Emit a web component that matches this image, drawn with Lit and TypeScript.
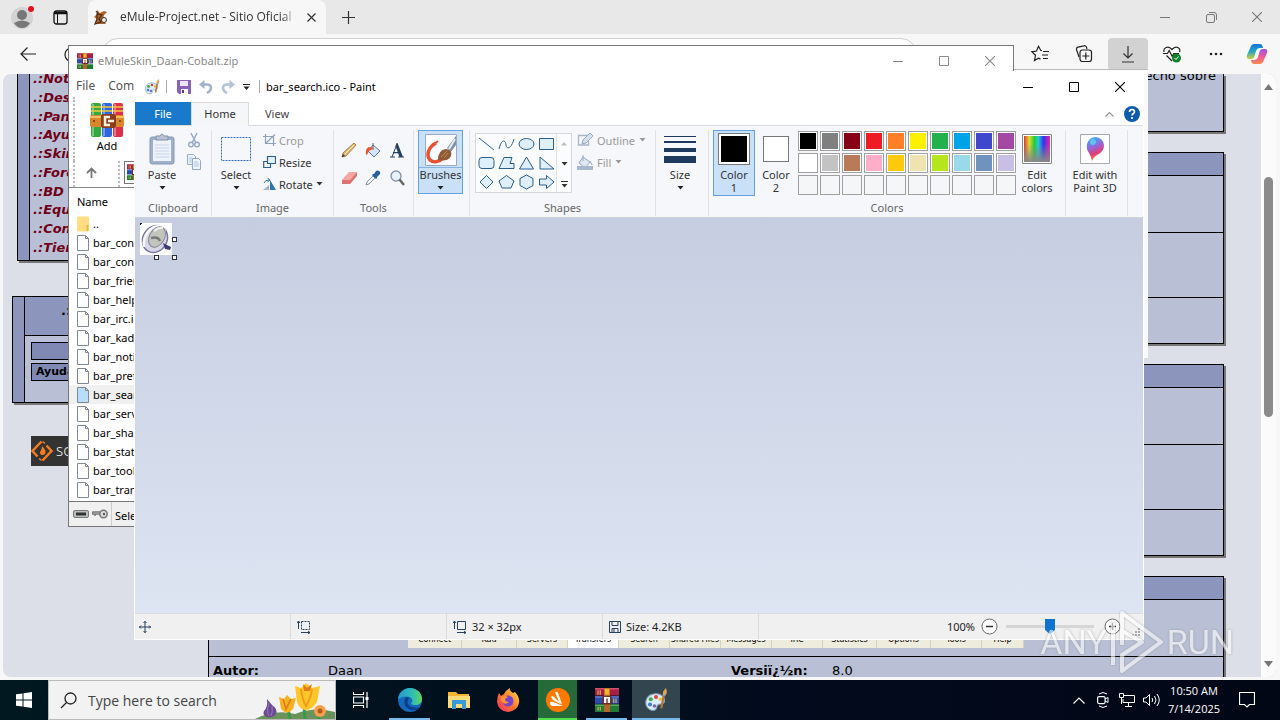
import { LitElement, html, svg, css } from "lit";
import { customElement } from "lit/decorators.js";
import { classMap } from "lit/directives/class-map.js";

const icon = (w: number, h: number, body: unknown) =>
  html`<svg width=${w} height=${h} viewBox="0 0 ${w} ${h}" fill="none" aria-hidden="true">${body}</svg>`;

const caret = html`<svg class="caret" width="7" height="4" viewBox="0 0 7 4" aria-hidden="true"><path d="M0.5 0h6L3.5 3.5z" fill="currentColor" /></svg>`;

const minimizeIcon = icon(10, 10, svg`<path d="M0 5.5h10" stroke="currentColor"/>`);
const maximizeIcon = icon(10, 10, svg`<path d="M.5 .5h9v9h-9z" stroke="currentColor"/>`);
const closeIcon = icon(10, 10, svg`<path d="M0 0l10 10M10 0L0 10" stroke="currentColor" stroke-width="1.1"/>`);
const restoreIcon = icon(11, 11, svg`<rect x=".5" y="2.500" width="8" height="8" rx="1.500" stroke="currentColor"/><path d="M3 .5h5a2.500 2.500 0 0 1 2.500 2.500v5" stroke="currentColor"/>`);

const booksIcon = (size: number) => html`<svg width=${size} height=${size} viewBox="0 0 32 32" aria-hidden="true">
  <rect x="0" y="0" width="32" height="10" fill="#a81f45"/><rect x="0" y="0" width="32" height="2" fill="#d0506e"/>
  <rect x="0" y="11" width="32" height="10" fill="#2f4ba8"/><rect x="0" y="11" width="32" height="2" fill="#6078cc"/>
  <rect x="0" y="22" width="32" height="10" fill="#1f7a35"/><rect x="0" y="22" width="32" height="2" fill="#56aa5c"/>
  <path d="M4 3v6M7 3v6M25 14v6M28 14v6M4 25v5M7 25v5" stroke="#d9b45e" stroke-width="1.500"/>
  <rect x="12" y="0" width="8" height="32" fill="#b5652a"/><path d="M13 1h6v8h-6z" fill="#efb62e"/>
  <rect x="10" y="11" width="12" height="11" fill="#6e2a22"/><rect x="12" y="12" width="8" height="8" fill="#fff"/><path d="M15 14h2v6h-2z" fill="#7b3b2b"/>
</svg>`;

const paletteIcon = (size: number) => html`<svg width=${size} height=${size} viewBox="0 0 32 32" aria-hidden="true">
  <path d="M13 8C5 9 1 16 3 23c2 6 8 8 12 6 3-2 1-5 4-7 3-1 6 0 8-3 2-6-5-13-14-11z" fill="#dcecf7" stroke="#87a9c4" stroke-width="1.400"/>
  <circle cx="9" cy="15" r="2.800" fill="#46a84b"/><circle cx="16" cy="12" r="2.700" fill="#d8473b"/><circle cx="8" cy="22" r="2.700" fill="#3d7fd0"/><circle cx="14" cy="24" r="2.400" fill="#7f5fc0"/><circle cx="22" cy="15" r="2.300" fill="#eebf32"/>
  <path d="M27 7l-4 20" stroke="#b57636" stroke-width="3"/><path d="M25 8c0-4 2-5 4-8 2 4 2 7 0 9z" fill="#e6a34b"/><path d="M25 9h4" stroke="#aab" stroke-width="2"/>
</svg>`;

const shared = css`
  :host, * { box-sizing: border-box; }
  svg { display: block; flex: none; }
  button, input { font: inherit; color: inherit; margin: 0; }
  button { border: 0; padding: 0; background: none; display: flex; align-items: center; justify-content: center; }
  .controls { display: flex; margin-left: auto; align-self: stretch; }
  .controls button { width: 46px; }
`;

const captionButtons = (maximized = false) => html`<div class="controls">
  <button aria-label="Minimize">${minimizeIcon}</button>
  <button aria-label="Maximize">${maximized ? restoreIcon : maximizeIcon}</button>
  <button aria-label="Close">${closeIcon}</button>
</div>`;

@customElement("browser-window")
class BrowserWindow extends LitElement {
  static styles = [shared, css`
    :host { display: flex; flex-direction: column; height: 100%; background: #f7f7f7; font: 12px/16px "Open Sans", sans-serif; color: #222; }
    .strip { display: flex; align-items: center; height: 34px; background: #e8e8e8; color: #777; flex: none; }
    .profile { width: 44px; }
    .tabs { width: 32px; }
    .tab { display: flex; align-items: center; gap: 11px; align-self: stretch; width: 238px; margin-left: 12px; padding: 0 10px 0 5px; border-radius: 8px 8px 0 0; background: #f7f7f7; color: #333; }
    .tab .name { flex: 1; min-width: 0; overflow: hidden; white-space: nowrap; mask-image: linear-gradient(90deg, #000 92%, transparent); }
    .new { width: 44px; color: #333; }
    .bar { display: flex; align-items: center; height: 40px; flex: none; color: #222; }
    .nav { width: 44px; height: 32px; padding-left: 12px; }
    .address { flex: 1; align-self: stretch; margin: 4px 103px 0 14px; border: 1px solid #d0d0d0; border-radius: 16px; background: #fff; min-width: 0; padding: 0 16px; }
    .tool { width: 40px; height: 32px; border-radius: 4px; margin-right: 4px; flex: none; }
    .tool.on { background: #d2d2d2; }
    .tool:last-child { margin: 0 3px 0 -3px; }
    .view { display: flex; flex: 1; min-height: 0; margin: 0 4px 3px 3px; border-radius: 8px; overflow: hidden; background: #dcdee8; }
    .page { flex: 1; min-width: 0; display: flex; justify-content: space-between; font: 13px/18px "DejaVu Sans", Verdana, sans-serif; color: #000; padding: 0 37px 0 9px; overflow: hidden; }
    .side { width: 170px; }
    .menu { margin-left: 5px; height: 187px; border: 1px solid #000; border-top: 0; box-shadow: 2px 2px 0 #777; background: #8c96bd; padding-left: 11px; }
    .links { height: 100%; border-left: 1px solid #000; background: #b9c0d5; display: flex; flex-direction: column; justify-content: space-between; padding: 0 3px 3px; margin: 0; list-style: none; }
    .links a { color: #700018; font-weight: bold; font-style: italic; text-decoration: none; }
    .links li { height: 18px; white-space: nowrap; }
    .links li:first-child { height: 14px; line-height: 10px; }
    .search { margin-top: 35px; border: 1px solid #000; box-shadow: 2px 2px 0 #777; background: #8c96bd; padding-left: 11px; }
    .search .in { border-left: 1px solid #000; background: #b9c0d5; height: 105px; }
    .search h2 { margin: 0; height: 39px; background: #8c96bd; border-bottom: 1px solid #000; font-size: 13px; line-height: 28px; padding-left: 36px; }
    .search form { display: flex; flex-direction: column; gap: 3px; padding: 6px; }
    .search input, .search button { height: 18px; border: 1px solid #000; background: #8089b3; width: 100%; }
    .search button { justify-content: flex-start; padding-left: 4px; font-weight: bold; font-size: 11px; }
    .forge { display: flex; align-items: center; gap: 3px; margin: 33px 0 0 19px; height: 30px; background: #333; color: #ddd; font: 13px/16px "Open Sans", sans-serif; text-decoration: none; }
    .main { width: 1016px; display: flex; flex-direction: column; gap: 20px; }
    .box { flex: none; border: 1px solid #000; box-shadow: 2px 2px 0 #777; background: #b9c0d5; }
    .box.first { border-top: 0; height: 58px; text-align: right; padding-right: 7px; line-height: 4px; }
    .box > * { border-bottom: 1px solid #000; }
    .box > :last-child { border-bottom: 0; }
    .box.first > * { border: 0; margin: 0; }
    .head { height: 23px; background: #8c96bd; }
    .shot { height: 57px; display: flex; justify-content: center; }
    .author { display: grid; grid-template-columns: 115px 403px 101px 1fr; height: 65px; padding: 5px 4px; margin: 0; }
    .author dt { font-weight: bold; } .author dd { margin: 0; }
    .notes { height: 45px; }
    .skin { width: 616px; height: 48px; background: #eeeddd; display: grid; grid-template-columns: 54px 55px repeat(6, 51px) 54px 54px 51px 1fr; align-items: end; text-align: center; font: 8px/16px "DejaVu Sans", sans-serif; white-space: nowrap; }
    .skin span { border-right: 1px solid #d5d3c0; }
    .skin .cur { background: #fff; }
    .scroll { width: 15px; background: #fbfbfb; border-radius: 0 8px 8px 0; display: flex; flex-direction: column; align-items: center; padding: 10px 0; color: #777; }
    .track { flex: 1; padding-top: 87px; }
    .thumb { width: 9px; height: 240px; border-radius: 5px; background: #8b8b8b; }
  `];
  rows(withShot: boolean) {
    return html`<section class="box">
      <div class="head"></div>
      <div class="shot">${withShot ? html`<div class="skin">
        ${["Connect", "Kad", "Servers", "Transfers", "Search", "Shared Files", "Messages", "IRC", "Statistics", "Options", "Tools", "Help"].map((t) => html`<span class=${classMap({ cur: t === "Transfers" })}>${t}</span>`)}
      </div>` : ""}</div>
      ${withShot
        ? html`<dl class="author"><dt>Autor:</dt><dd>Daan</dd><dt>Versiï¿½n:</dt><dd>8.0</dd></dl>`
        : html`<div class="author"></div>`}
      <div class="notes"></div>
    </section>`;
  }
  render() {
    return html`
      <div class="strip">
        <button class="profile" aria-label="Profile">${icon(26, 26, svg`<circle cx="13" cy="14" r="11" fill="#d3d3d3"/><circle cx="13" cy="11" r="5" fill="#777"/><path d="M5 19q8-5 16 0-3 5-8 5t-8-5z" fill="#777"/><circle cx="22" cy="5" r="3" fill="#e3101c"/>`)}</button>
        <button class="tabs" aria-label="Tab actions">${icon(15, 15, svg`<rect x="1" y="1" width="13" height="13" rx="2.500" stroke="#111" stroke-width="1.300"/><path d="M1 3h13" stroke="#111" stroke-width="2.500"/><path d="M4.500 3v11" stroke="#111"/>`)}</button>
        <div class="tab">
          ${icon(16, 16, svg`<path d="M4 1l3 3 4-2 3 1-3 3-1 4 3 5H2l2-5-3-2 3-3z" fill="#b0622a"/><path d="M4 5l5 1-3 4 2 3-6 2 2-5zM3 2l3 4" stroke="#4c2815" stroke-width="1.200"/><circle cx="11" cy="11" r="2.500" fill="#eee" stroke="#333"/>`)}
          <span class="name">eMule-Project.net - Sitio Oficial de eMule</span>
          <button aria-label="Close tab">${icon(9, 9, svg`<path d="M.5 .5l8 8M8.500 .5l-8 8" stroke="#333" stroke-width="1.200"/>`)}</button>
        </div>
        <button class="new" aria-label="New tab">${icon(13, 13, svg`<path d="M6.500 0v13M0 6.500h13" stroke="#333" stroke-width="1.200"/>`)}</button>
        ${captionButtons(true)}
      </div>
      <div class="bar">
        <button class="nav" aria-label="Back">${icon(16, 14, svg`<path d="M16 7H1M7.500 .5L1 7l6.500 6.500" stroke="#222" stroke-width="1.200"/>`)}</button>
        <button class="nav" aria-label="Refresh">${icon(16, 16, svg`<path d="M14 5a7 7 0 1 0 1 3M14 1v4h-4" stroke="#222" stroke-width="1.200"/>`)}</button>
        <input class="address" aria-label="Address" />
        <button class="tool" aria-label="Favorites">${icon(18, 18, svg`<path d="M11 5.500H9.800L7.500 1.300 5.500 6 1 6.800l3.500 3.500-1 5.200 4-2.300 2 .9M12 6.500h6M11 10h6M12 13.500h5" stroke="#222" stroke-width="1.200"/>`)}</button>
        <button class="tool" aria-label="Collections">${icon(18, 18, svg`<path d="M4 12L1.500 4.500a2 2 0 0 1 1.500-2.300l6-1.400a2 2 0 0 1 2.500 1.400L12 4" stroke="#222" stroke-width="1.200"/><rect x="5" y="5" width="11.500" height="11.500" rx="2.500" fill="#f7f7f7" stroke="#222" stroke-width="1.200"/><path d="M10.800 7.500v7M7.300 11h7" stroke="#222" stroke-width="1.200"/>`)}</button>
        <button class="tool on" aria-label="Downloads">${icon(14, 18, svg`<path d="M7 1v12M2.500 8.500L7 13l4.500-4.500M1 17h12" stroke="#333" stroke-width="1.200"/>`)}</button>
        <button class="tool" aria-label="Browser essentials">${icon(18, 18, svg`<path d="M9 16L3.500 10.500M1 7C0 3 5 0 9 4.500 13 0 18 3 16.500 7M0 8.500h4.500l1.700-3 3 6 1.500-3H16" stroke="#222" stroke-width="1.200"/><circle cx="13.500" cy="13" r="4.500" fill="#11802a"/><path d="M11.500 13l1.500 1.500 2.500-3" stroke="#fff"/>`)}</button>
        <button class="tool" aria-label="Settings">${icon(14, 4, svg`<circle cx="2" cy="2" r="1.300" fill="#222"/><circle cx="7" cy="2" r="1.300" fill="#222"/><circle cx="12" cy="2" r="1.300" fill="#222"/>`)}</button>
        <button class="tool" aria-label="Copilot">${icon(22, 22, svg`<defs><linearGradient id="ca" x1="0" y1="0" x2="0" y2="1"><stop stop-color="#1673e0"/><stop offset=".5" stop-color="#22a6c5"/><stop offset="1" stop-color="#d8cf3a"/></linearGradient><linearGradient id="cb" x1="0" y1="0" x2="0" y2="1"><stop stop-color="#9a55e8"/><stop offset=".5" stop-color="#ee5a9c"/><stop offset="1" stop-color="#f58a4b"/></linearGradient></defs><path d="M5 3q1-2 3-2h6q2 0 2.500 2L17 5h-3q-3 0-4 3l-1.500 5Q8 16 5 16H3q-3 0-2-4z" fill="url(#ca)"/><path d="M17 19q-1 2-3 2H8q-2 0-2.500-2L5 17h3q3 0 4-3l1.500-5Q14 6 17 6h2q3 0 2 4z" fill="url(#cb)"/>`)}</button>
      </div>
      <div class="view">
        <div class="page">
          <div class="side">
            <nav class="menu"><ul class="links">
              ${["Noticias", "Descarga", "Pantallas", "Ayuda", "Skins", "Foros", "BD eMule", "Equipo", "Contacto", "Tienda"].map((t) => html`<li><a href="#">.:${t}</a></li>`)}
            </ul></nav>
            <section class="search"><div class="in">
              <h2>.:Buscar:.</h2>
              <form><input aria-label="Buscar" /><button type="button">Ayuda</button></form>
            </div></section>
            <a class="forge" href="#">${icon(22, 22, svg`<path d="M10.500 1.500L1.500 11l5 5.500M11.500 20.500l9-9.500-5-5.500" stroke="#f47b20" stroke-width="2.500"/><path d="M8 18.500l2.500 2M14 3.500l-2.500-2" stroke="#f47b20" stroke-width="1.500"/><path d="M11 6c4 4 4 6 3 8-2 2-5 1-5-1s2-3 2-7z" fill="#f47b20"/>`)}SOURCEFORGE</a>
          </div>
          <main class="main">
            <section class="box first"><p>hecho sobre</p></section>
            ${this.rows(false)}${this.rows(false)}${this.rows(true)}
          </main>
        </div>
        <div class="scroll">
          ${icon(9, 6, svg`<path d="M4.500 0L9 6H0z" fill="#777"/>`)}
          <div class="track"><div class="thumb"></div></div>
          ${icon(9, 6, svg`<path d="M4.500 6L9 0H0z" fill="#777"/>`)}
        </div>
      </div>`;
  }
}

@customElement("archive-window")
class ArchiveWindow extends LitElement {
  static styles = [shared, css`
    :host { display: flex; flex-direction: column; background: #fff; border: 1px solid #777; font: 11px/16px "Noto Sans", "Open Sans", sans-serif; color: #000; }
    .title { display: flex; align-items: center; gap: 5px; height: 29px; padding-left: 8px; color: #888; flex: none; }
    .menu { display: flex; gap: 13px; height: 22px; padding: 3px 7px 0; color: #555; flex: none; white-space: nowrap; font-size: 12px; }
    .tools { height: 64px; margin-left: 4px; border-left: 2px dotted #bbb; padding: 5px 0 0 12px; display: flex; flex: none; }
    .add { flex-direction: column; gap: 0; width: 40px; align-self: flex-start; }
    .path { display: flex; height: 27px; flex: none; padding-left: 4px; border-bottom: 1px solid #888; }
    .up { width: 47px; padding: 0 10px 4px 0; border-right: 2px dotted #bbb; border-left: 2px dotted #bbb; }
    .where { flex: 1; margin: 0 6px 3px 4px; border: 1px solid #777; padding: 2px; }
    .files { flex: 1; background: #fff; min-height: 0; overflow: hidden; border-bottom: 1px solid #777; }
    table { width: 100%; border-collapse: collapse; }
    th { text-align: left; font-weight: 400; height: 26px; padding: 2px 8px 0; }
    td { height: 19px; padding: 0 8px; }
    .row { display: flex; align-items: center; gap: 4px; }
    .sel { background: #f0f0f0; }
    .status { display: flex; align-items: center; gap: 3px; height: 24px; background: #f0f0f0; flex: none; padding-left: 4px; }
    .status span { border-left: 1px solid #ccc; padding: 6px 3px 2px; }
  `];
  render() {
    const sheet = (on: boolean) => icon(12, 16, svg`<path d="M.5 .5h8l3 3v12H.5z" fill=${on ? "#b9dcf8" : "#fdfdfd"} stroke="#808890"/><path d="M8.500 .5v3h3" stroke="#808890"/>`);
    const names = ["connect", "contact", "friend", "help", "irc", "kad", "notify", "pref", "search", "servers", "shared", "stats", "tools", "transfer"];
    return html`
      <div class="title">${booksIcon(16)}<span>eMuleSkin_Daan-Cobalt.zip</span>${captionButtons()}</div>
      <div class="menu"><span>File</span><span>Commands</span></div>
      <div class="tools"><button class="add">${icon(34, 36, svg`
        <rect x="1" y="1" width="10" height="34" rx="2" fill="#35a83f"/><rect x="12" y="1" width="10" height="34" rx="2" fill="#2d66df"/><rect x="23" y="1" width="10" height="34" rx="2" fill="#dc2f4c"/>
        <path d="M3 2v32M14 2v32M25 2v32" stroke="#fff" stroke-opacity=".35" stroke-width="2"/><path d="M1 5h10M12 5h10M23 5h10M1 9h10M12 9h10M23 9h10" stroke="#f4c83c" stroke-width="1.500"/>
        <rect x="0" y="13" width="34" height="12" rx="2" fill="#d9862c"/><path d="M0 15h34" stroke="#f6bd62" stroke-width="2"/><rect x="11" y="12" width="15" height="14" rx="2" fill="#8b3e1b"/><path d="M20 15h-5v8h5M18 19h6" stroke="#f7eee0" stroke-width="2.500"/><circle cx="4" cy="19" r="1" fill="#6b3515"/><circle cx="30" cy="19" r="1" fill="#6b3515"/>`)}Add</button></div>
      <div class="path"><button class="up" aria-label="Up">${icon(11, 11, svg`<path d="M5.500 11V1.500M1 6l4.500-4.500L10 6" stroke="#777" stroke-width="1.800"/>`)}</button><div class="where">${booksIcon(16)}</div></div>
      <div class="files"><table>
        <thead><tr><th>Name</th></tr></thead>
        <tbody>
          <tr><td><div class="row">${icon(12, 16, svg`<rect width="12" height="15" y="0.500" rx="1" fill="#ffdd80"/><path d="M10.500 9v6" stroke="#e8b53c" stroke-width="2"/>`)}..</div></td></tr>
          ${names.map((n) => html`<tr class=${classMap({ sel: n === "search" })}><td><div class="row">${sheet(n === "search")}bar_${n}.ico</div></td></tr>`)}
        </tbody>
      </table></div>
      <div class="status">
        ${icon(16, 8, svg`<rect x=".5" y=".5" width="15" height="7" rx="1.500" fill="#b9c0c0" stroke="#777"/><path d="M3 4h10" stroke="#333" stroke-width="3"/>`)}
        ${icon(16, 10, svg`<circle cx="11.500" cy="5" r="3.700" fill="#ddd" stroke="#777" stroke-width="1.500"/><path d="M8 3H1l-1 2h8M3 5v2" stroke="#777" stroke-width="1.500"/><circle cx="12" cy="5" r="1.200" fill="#555"/>`)}
        <span>Selected 1 file</span>
      </div>`;
  }
}

const S = "#2b5f8f";
const shapes = [
  svg`<path d="M1 2l15 12" stroke=${S}/>`,
  svg`<path d="M1 13C4 1 8 5 8 9s5 5 8-6" fill="none" stroke=${S}/>`,
  svg`<ellipse cx="8.500" cy="8" rx="7.500" ry="5.500" stroke=${S}/>`,
  svg`<path d="M1.500 2.500h14v11h-14z" stroke=${S}/>`,
  svg`<rect x="1" y="2.500" width="15" height="11" rx="3" stroke=${S}/>`,
  svg`<path d="M6 2.500h8l-2 6h4v5H1z" stroke=${S}/>`,
  svg`<path d="M8.500 2L15.500 14h-14z" stroke=${S}/>`,
  svg`<path d="M2 2v12h14z" stroke=${S}/>`,
  svg`<path d="M8.500 1.500L15 8l-6.500 6.500L2 8z" stroke=${S}/>`,
  svg`<path d="M8.500 1.500L16 7l-3 7H4L1 7z" stroke=${S}/>`,
  svg`<path d="M8.500 1L15 4.500v7L8.500 15 2 11.500v-7z" stroke=${S}/>`,
  svg`<path d="M1.500 5h7V1.500L16 8l-7.500 6.500V11h-7z" stroke=${S}/>`,
];
const swatches = [
  "#000000", "#7f7f7f", "#880015", "#ed1c24", "#ff7f27", "#fff200", "#22b14c", "#00a2e8", "#3f48cc", "#a349a4",
  "#ffffff", "#c3c3c3", "#b97a57", "#ffaec9", "#ffc90e", "#efe4b0", "#b5e61d", "#99d9ea", "#7092be", "#c8bfe7",
  "", "", "", "", "", "", "", "", "", "",
];

@customElement("paint-window")
class PaintWindow extends LitElement {
  static styles = [shared, css`
    :host { display: flex; flex-direction: column; background: #fff; border: 1px solid #fff; border-top: 0; font: 11px/13px "Noto Sans", "Open Sans", sans-serif; color: #444; }
    .title { display: flex; align-items: center; height: 31px; color: #000; flex: none; padding-left: 9px; }
    .title > button { width: 22px; height: 22px; }
    .sep { width: 1px; height: 13px; background: #aaa; margin: 0 6px; }
    .title > .small { width: 14px; }
    .tabs { display: flex; height: 24px; border-bottom: 1px solid #dadbdc; flex: none; align-items: stretch; }
    .tabs button { width: 56px; }
    .tabs .file { background: #1979ca; color: #fff; }
    .tabs .home { width: 58px; background: #f5f6f7; border: 1px solid #dadbdc; border-bottom: 0; margin-bottom: -1px; padding-bottom: 2px; color: #333; }
    .tabs .icons { margin-left: auto; display: flex; align-items: center; gap: 10px; padding-right: 3px; }
    .tabs .icons button { width: auto; }
    .ribbon { display: flex; height: 92px; background: #f5f7fa; border-bottom: 1px solid #ccd2db; flex: none; padding-top: 4px; }
    .group { border-right: 1px solid #e1e3e6; display: flex; flex-direction: column; align-items: center; margin-bottom: 1px; color: #666; }
    .group > div { flex: 1; display: flex; align-self: stretch; color: #333; }
    .group > span { height: 16px; line-height: 16px; }
    .clip { width: 77px; } .image { width: 122px; } .toolset { width: 80px; } .brush { width: 56px; }
    .shapeset { width: 186px; } .size { width: 53px; } .colors { width: 357px; } .three { width: 62px; }
    .big { flex-direction: column; justify-content: flex-start; align-self: flex-start; width: 44px; height: 66px; border: 1px solid transparent; padding-top: 2px; flex: none; }
    .big .pic { height: 32px; display: flex; align-items: center; justify-content: center; margin-bottom: 3px; }
    .big .caret { margin-top: 5px; color: #222; }
    .big.on { background: #c9e0f7; border-color: #62a2e4; }
    .big.split { height: 64px; width: 45px; }
    .split .pic { align-self: stretch; border-bottom: 1px solid #82b4e8; height: 35px; margin-bottom: 0; }
    .col { display: flex; flex-direction: column; align-items: flex-start; margin-top: -1px; }
    .col button { height: 22px; gap: 4px; white-space: nowrap; min-width: 20px; }
    .off { color: #999; }
    .clip > div { padding-left: 5px; } .clip .col button { width: 20px; }
    .image > div { gap: 5px; padding-left: 2px; }
    .image .col button { gap: 3px; }
    .toolset > div { display: grid; grid-template-columns: repeat(3, 24px); grid-auto-rows: 28px; padding: 6px 0 0 3px; }
    .brush > div { padding-left: 4px; }
    .size > div { padding-left: 2px; }
    .shapeset > div { gap: 5px; padding: 3px 0 0 5px; }
    .gallery { display: flex; border: 1px solid #d4d8dd; height: 60px; background: #fafcfe; }
    .gallery .grid { display: grid; grid-template-columns: repeat(4, 20px); grid-auto-rows: 19px; border-right: 1px solid #e1e3e6; }
    .gallery .grid svg { fill: #dfeffb; }
    .gallery .arrows { display: grid; grid-auto-rows: 20px; width: 14px; }
    .shapeset .col { margin-top: -4px; }
    .colors > div { padding-left: 4px; }
    .colors .big { width: 42px; }
    .well { border: 1px solid #777; padding: 2px; background: #fff; width: 32px; height: 32px; }
    .well.two { width: 26px; height: 26px; }
    .well i { display: block; width: 100%; height: 100%; background: #000; }
    .well.two i { background: #fff; }
    .palette { display: grid; grid-template-columns: repeat(10, 20px); grid-auto-rows: 20px; gap: 2px; padding-top: 1px; margin: 0 0 0 1px; }
    .palette button { border: 1px solid #a0a0a0; padding: 1px; background: #fff; }
    .palette .empty { background: #f5f6f7; }
    .palette i { width: 100%; height: 100%; }
    .three .big { width: 58px; }
    .canvas { flex: 1; min-height: 0; background: linear-gradient(#c6cde0, #dde5f3); padding: 5px; }
    .sheet { position: relative; width: 32px; height: 32px; background: #fff; }
    .grip { position: absolute; width: 5px; height: 5px; border: 1px solid #333; background: #fff; }
    .e { left: 32px; top: 14px; } .s { left: 14px; top: 32px; } .se { left: 32px; top: 32px; }
    .status { display: flex; height: 26px; background: #f0f0f0; border-top: 1px solid #dadbdc; flex: none; color: #222; }
    .cell { display: flex; align-items: center; gap: 5px; width: 156px; padding-left: 6px; border-right: 1px solid #dadbdc; }
    .cell:first-child { padding-left: 4px; }
    .zoom { display: flex; align-items: center; margin-left: auto; gap: 6px; padding-right: 2px; }
    .zoom > svg { margin-left: 2px; }
    input[type="range"] { appearance: none; width: 88px; height: 16px; margin: 0 4px 0 2px; background: linear-gradient(#d6d6d6, #d6d6d6) center / 100% 3px no-repeat; }
    input[type="range"]::-webkit-slider-thumb { appearance: none; width: 10px; height: 16px; background: #0f74cf; clip-path: polygon(0 0, 100% 0, 100% 70%, 50% 100%, 0 70%); }
  `];
  big(label: unknown, pic: unknown, arrow = true, cls = "") {
    return html`<button class="big ${cls}"><span class="pic">${pic}</span><span>${label}</span>${arrow ? caret : ""}</button>`;
  }
  render() {
    const sizeIcon = (dash: string) => icon(14, 14, svg`<path d="M4.500 1.500h8v8h-8z" stroke="#26415e" stroke-dasharray=${dash}/><path d="M1.500 9V1M0 3l1.500-2L3 3M4 12.500h9M11 11l2 1.500-2 1.500" stroke="#26415e"/>`);
    return html`
      <div class="title">
        ${paletteIcon(16)}<span class="sep"></span>
        <button aria-label="Save">${icon(14, 14, svg`<path d="M0 0h14v14H2l-2-2z" fill="#8a63b8"/><path d="M3 1h8v5H3z" fill="#ece6f7"/><path d="M4 9h7v5H4z" fill="#fff"/><path d="M5 10h2v3H5z" fill="#5d3c8d"/>`)}</button>
        <button aria-label="Undo">${icon(14, 14, svg`<path d="M2 4.500h6q4 0 4 3.500 0 3-4 5" stroke="#a2b3cf" stroke-width="2.500"/><path d="M0 4.500L5.500 0v9z" fill="#a2b3cf"/>`)}</button>
        <button aria-label="Redo">${icon(14, 14, svg`<path d="M12 4.500H6q-4 0-4 3.500 0 3 4 5" stroke="#b3c2d8" stroke-width="2.500"/><path d="M14 4.500L8.500 0v9z" fill="#b3c2d8"/>`)}</button>
        <button class="small" aria-label="Customize">${icon(7, 6, svg`<path d="M0 .5h7" stroke="#222"/><path d="M.5 2.500h6l-3 3.500z" fill="#222"/>`)}</button>
        <span class="sep"></span><span>bar_search.ico - Paint</span>${captionButtons()}
      </div>
      <div class="tabs">
        <button class="file">File</button><button class="home">Home</button><button>View</button>
        <div class="icons"><button aria-label="Collapse ribbon">${icon(9, 6, svg`<path d="M.5 5.500l4-4 4 4" stroke="#999" stroke-width="1.200"/>`)}</button>
        <button aria-label="Help">${icon(16, 16, svg`<circle cx="8" cy="8" r="8" fill="#0b5cad"/><path d="M5.500 6q0-2.500 2.500-2.500T10.500 6C10.500 7.500 8 7.500 8 9.500M8 11v2" stroke="#fff" stroke-width="1.700"/>`)}</button></div>
      </div>
      <div class="ribbon">
        <section class="group clip"><div>
          ${this.big("Paste", icon(26, 32, svg`<rect x="1" y="4" width="24" height="27" rx="2" fill="#9fb0cc" stroke="#8797b5"/><path d="M4 7h18v21H4z" fill="#eef3fa"/><path d="M6 12h14M6 15h14M6 18h14M6 21h14M6 24h14" stroke="#c4d3ea"/><path d="M7 3h4q2-4 4 0h4v4H7z" fill="#b9c2d2" stroke="#8490a8"/>`))}
          <div class="col"><button aria-label="Cut">${icon(14, 16, svg`<path d="M4 1l5 10M10 1L5 11" stroke="#98a9c4" stroke-width="1.500"/><circle cx="4" cy="12.500" r="2.300" stroke="#98a9c4" stroke-width="1.400"/><circle cx="10" cy="12.500" r="2.300" stroke="#98a9c4" stroke-width="1.400"/>`)}</button>
          <button aria-label="Copy">${icon(16, 16, svg`<path d="M1.500 .5h6l2 2v8h-8z" fill="#edf3fb" stroke="#98a9c4"/><path d="M6.500 4.500h6l2 2v9h-8z" fill="#edf3fb" stroke="#98a9c4"/><path d="M3 4h3M3 6h3M3 8h3M8 8h4M8 10h5M8 12h5" stroke="#b4c4de"/>`)}</button></div>
        </div><span>Clipboard</span></section>
        <section class="group image"><div>
          ${this.big("Select", icon(30, 24, svg`<rect x=".5" y=".5" width="29" height="23" stroke="#3271b5" stroke-dasharray="2 1"/>`))}
          <div class="col">
            <button class="off">${icon(13, 12, svg`<path d="M2.500 0v9.500H13M0 2.500h10.500V12M3 9l9-8.500" stroke="#8fa3bf" stroke-width="1.200"/>`)}Crop</button>
            <button>${icon(13, 12, svg`<path d="M4.500 .5h8v7h-8z" fill="#e5f1fc" stroke="#2c6094" stroke-width="1.200"/><path d="M4 5.500H.7v6h6.800V8" stroke="#2c6094" stroke-width="1.200"/>`)}Resize</button>
            <button>${icon(13, 12, svg`<path d="M0 12L6 7v5z" fill="#a5b5c5"/><path d="M7 12V2L13 12z" fill="#2f74ac"/><path d="M1 5q1-3 5-3M4.500 0L7 2 4.500 4" stroke="#2f74ac"/>`)}Rotate ${caret}</button>
          </div></div><span>Image</span></section>
        <section class="group toolset"><div>
          <button aria-label="Pencil">${icon(16, 16, svg`<path d="M1 15l1-4L13 1l2 2L5 14z" fill="#e9b872" stroke="#a87f4c"/><path d="M4 12l9-9" stroke="#fff0c5"/><path d="M1 15l1-3 2 2z" fill="#333"/>`)}</button>
          <button aria-label="Fill">${icon(17, 16, svg`<path d="M8 3l7 6-6 6-6-6z" fill="#d5e5f5" stroke="#58789b"/><path d="M8 1v7" stroke="#667"/><path d="M1 13q-1-7 3-8l5 1-5 3q-1 3-3 4z" fill="#e2582e"/>`)}</button>
          <button aria-label="Text">${icon(14, 15, svg`<path d="M7 1L2 14" stroke="#26415e"/><path d="M6.500 0h1L13 14H9.500L5.500 3zM3 9h6v1.300H3zM0 13.500h5v1H0zM8 13.500h6v1H8z" fill="#26415e"/>`)}</button>
          <button aria-label="Eraser">${icon(17, 14, svg`<path d="M1 9l7-8h8l-7 8z" fill="#f5a6a3"/><path d="M1 9v4h8V9zM9 9l7-8v4l-7 8z" fill="#dd716f"/>`)}</button>
          <button aria-label="Color picker">${icon(16, 16, svg`<path d="M1 15l1-3 6-6 2 2-6 6z" fill="#f4f8fc" stroke="#8193a5"/><path d="M7 5l4 4 1-1V7l3-3q1-2-1-3t-3 0L9 4H8z" fill="#245fa0"/>`)}</button>
          <button aria-label="Magnifier">${icon(15, 16, svg`<circle cx="6" cy="6" r="5" fill="#e6f2fc" stroke="#8796a8" stroke-width="1.400"/><path d="M9.500 9.500L14 15" stroke="#666" stroke-width="2.500"/>`)}</button>
        </div><span>Tools</span></section>
        <section class="group brush"><div>
          ${this.big("Brushes", icon(32, 32, svg`<path d="M.5 .5h31v31H.5z" fill="#fbfcff" stroke="#9aaac0"/><path d="M11 9C3 13 1 22 5 26c4 3 9 2 13-2" stroke="#e9522e" stroke-width="3.500"/><path d="M8 11l5-4" stroke="#e9522e" stroke-width="2"/><path d="M31 2L22 14l4 4 5-7z" fill="#8292a5"/><path d="M30 5l-6 10" stroke="#e6edf4" stroke-width="2"/><path d="M13 26q0-10 8-11 7 1 5 7-3 6-13 4z" fill="#8d5a34"/><path d="M16 23l6-6M19 24l4-5" stroke="#c08758"/>`), true, "on split")}
        </div></section>
        <section class="group shapeset"><div>
          <div class="gallery"><div class="grid">${shapes.map((s) => html`<button aria-label="Shape"><svg width="17" height="16" viewBox="0 0 17 16">${s}</svg></button>`)}</div>
            <div class="arrows"><button class="off" aria-label="Up">${icon(6, 4, svg`<path d="M0 3.500h6L3 0z" fill="#bbb"/>`)}</button><button aria-label="Down">${caret}</button><button aria-label="More">${icon(7, 7, svg`<path d="M0 .5h7" stroke="#333"/><path d="M.5 3h6l-3 3.500z" fill="#333"/>`)}</button></div></div>
          <div class="col">
            <button class="off">${icon(16, 14, svg`<path d="M1 2.500h10M1.500 2v10h10V8" stroke="#a9b5c8" stroke-width="1.300"/><path d="M5 11l1-4 7-7 3 3-7 7z" fill="#d6dfec" stroke="#98a9c4"/>`)}Outline ${caret}</button>
            <button class="off">${icon(16, 15, svg`<path d="M6 2l7 5-5 6-6-5z" fill="#dfe8f3" stroke="#98a9c4"/><path d="M6 0v6M13 6l2 4" stroke="#98a9c4"/><path d="M0 11h16v4H0z" fill="#a9b8cf"/>`)}Fill ${caret}</button>
          </div></div><span>Shapes</span></section>
        <section class="group size"><div>
          ${this.big("Size", icon(32, 28, svg`<path d="M0 1.500h32" stroke="#1f3a5f"/><path d="M0 7h32" stroke="#1f3a5f" stroke-width="2"/><path d="M0 15h32" stroke="#1f3a5f" stroke-width="4"/><path d="M0 24.500h32" stroke="#1f3a5f" stroke-width="7"/>`))}
        </div></section>
        <section class="group colors"><div>
          ${this.big(html`Color<br />1`, html`<span class="well"><i></i></span>`, false, "on")}
          ${this.big(html`Color<br />2`, html`<span class="well two"><i></i></span>`, false)}
          <div class="palette">${swatches.map((c) => html`<button aria-label=${c || "Custom color"} class=${classMap({ empty: !c })}>${c ? html`<i style="background:${c}"></i>` : ""}</button>`)}</div>
          ${this.big(html`Edit colors`, icon(30, 30, svg`<defs><linearGradient id="h"><stop stop-color="#d33"/><stop offset=".2" stop-color="#dd3"/><stop offset=".4" stop-color="#2c3"/><stop offset=".55" stop-color="#2cd"/><stop offset=".75" stop-color="#33e"/><stop offset="1" stop-color="#e2a"/></linearGradient><linearGradient id="g" x2="0" y2="1"><stop offset=".3" stop-color="#888" stop-opacity="0"/><stop offset="1" stop-color="#888"/></linearGradient></defs><path d="M.5 .5h29v29H.5z" fill="#fff" stroke="#888"/><path d="M2 2h26v26H2z" fill="url(#h)"/><path d="M2 2h26v26H2z" fill="url(#g)"/>`), false)}
        </div><span>Colors</span></section>
        <section class="group three"><div>
          ${this.big(html`Edit with Paint 3D`, icon(30, 30, svg`<defs><linearGradient id="p" x1=".2" y1="0" x2=".5" y2="1"><stop stop-color="#35b7e8"/><stop offset=".4" stop-color="#8d6be0"/><stop offset=".7" stop-color="#e0407e"/><stop offset="1" stop-color="#ff8a1f"/></linearGradient></defs><path d="M.5 .5h29v29H.5z" fill="#fff" stroke="#aaa"/><path d="M12 27q-1-5-3-8-3-4-2-9 2-7 9-7 7 1 8 8 0 6-5 9-5 2-7 7z" fill="url(#p)"/><circle cx="13" cy="8" r="3" fill="#5fdcf2" opacity=".7"/>`), false)}
        </div></section>
      </div>
      <div class="canvas"><div class="sheet">
        ${icon(32, 32, svg`<path d="M0 0h2v1H1v1H0z" fill="#111"/><ellipse cx="15" cy="16" rx="14" ry="12" transform="rotate(-58 15 16)" fill="#d6d6e6" stroke="#77779e" stroke-width="1.500"/><path d="M4 24C2 12 12 2 20 3c6 1 6 8 2 15" stroke="#f8f8ff" stroke-width="2.500"/><ellipse cx="17" cy="14" rx="11" ry="7.500" transform="rotate(-60 17 14)" fill="#c3c4bb" stroke="#84849a"/><path d="M11 15q7-2 9 3" stroke="#777a76" stroke-width="2.500"/><path d="M14 8q5-4 9-3" stroke="#f3f3ea" stroke-width="2"/><path d="M23 20l8 4-1 3-5-1z" fill="#3e3b78"/>`)}
        <span class="grip e"></span><span class="grip s"></span><span class="grip se"></span>
      </div></div>
      <div class="status">
        <div class="cell">${icon(12, 12, svg`<path d="M6 0v12M0 6h12M4.500 2L6 .5 7.500 2M4.500 10L6 11.500 7.500 10M2 4.500L.5 6 2 7.500M10 4.500L11.500 6 10 7.500" stroke="#26415e"/>`)}</div>
        <div class="cell">${sizeIcon("2 1")}</div>
        <div class="cell">${sizeIcon("none")}<span>32 × 32px</span></div>
        <div class="cell">${icon(12, 12, svg`<path d="M.5 .5h11v11h-11zM3 .5v4h6v-4M3 11V7.500h6V11M5 8v3" stroke="#26415e"/>`)}<span>Size: 4.2KB</span></div>
        <div class="zoom"><span>100%</span>
          <button aria-label="Zoom out">${icon(17, 17, svg`<circle cx="8.500" cy="8.500" r="7.500" fill="#fff" stroke="#666"/><path d="M5 8.500h7" stroke="#333" stroke-width="1.500"/>`)}</button>
          <input type="range" aria-label="Zoom" />
          <button aria-label="Zoom in">${icon(17, 17, svg`<circle cx="8.500" cy="8.500" r="7.500" fill="#fff" stroke="#666"/><path d="M5 8.500h7M8.500 5v7" stroke="#333" stroke-width="1.500"/>`)}</button>
          ${icon(12, 20, svg`<path d="M9 12h2M6 15h2M9 15h2M3 18h2M6 18h2M9 18h2" stroke="#aaa" stroke-width="2"/>`)}
        </div>
      </div>`;
  }
}

@customElement("task-bar")
class TaskBar extends LitElement {
  static styles = [shared, css`
    :host { display: flex; height: 40px; background: linear-gradient(90deg, #011820, #020a1c 65%, #020716); color: #fff; font: 12px/18px "Open Sans", sans-serif; }
    .start { width: 48px; }
    .search { width: 288px; display: flex; align-items: center; gap: 11px; background: #f2f2f2; border: 1px solid #bbb; color: #333; padding-left: 11px; }
    .search input { flex: 1; min-width: 0; border: 0; padding: 0; background: none; font-size: 14px; height: 30px; }
    .search input::placeholder { color: #444; opacity: 1; }
    .app { width: 49px; position: relative; }
    .app.run::after { content: ""; position: absolute; left: 4px; right: 4px; bottom: 0; height: 2px; background: #76b9ed; }
    .app.avast { width: 39px; margin: 0 5px 0 6px; background: #276a3a; }
    .app.avast::after { left: 0; right: 0; background: #4fe04f; }
    .app.active { background: #33454f; width: 48px; margin-left: 1px; }
    .app.active::after { left: 0; right: 0; }
    .tray { margin-left: auto; display: flex; align-items: center; }
    .tray button { width: 24px; height: 40px; }
    .clock { width: 62px; text-align: center; font-size: 11px; }
    .tray .note { width: 44px; margin-right: 11px; }
  `];
  render() {
    return html`
      <button class="start" aria-label="Start">${icon(16, 16, svg`<path d="M0 2.300l6.500-.9v6.100H0zM7.500 1.200L16 0v7.500H7.500zM0 8.500h6.500v6.100L0 13.700zM7.500 8.500H16V16l-8.500-1.200z" fill="#fff"/>`)}</button>
      <label class="search">${icon(17, 17, svg`<circle cx="10.500" cy="6.500" r="5.500" stroke="#222" stroke-width="1.300"/><path d="M6.500 10.500L1 16" stroke="#222" stroke-width="1.300"/>`)}
        <input aria-label="Search" placeholder="Type here to search" />
        ${icon(80, 38, svg`<path d="M0 38q20-10 40-5 20-8 40-2v7z" fill="#69935a"/><path d="M35 38q-2-12-4-16M50 38q-2-14 2-20M64 38V27" stroke="#3a9a48" stroke-width="3"/><path d="M12 18l5 6q6 4 4 9-3 4-9 3-5-2-3-6 4-4 3-12z" fill="#6a4a93"/><path d="M14 22q-3 8 0 13M17 25q1 6-1 10" stroke="#9a78bd"/><path d="M24 16l5 2 3-4 4 4 5-1-3 11q-6 7-12 0z" fill="#f4b120"/><path d="M28 18l3 10 5-10" stroke="#e2761b" stroke-width="1.500"/><path d="M40 5l6 2 5-5 6 5 8-2-3 16q-5 8-11 8t-9-8z" fill="#ffc629"/><path d="M46 8q1 10 5 17 5-8 6-17" stroke="#ef9d1c" stroke-width="2"/><path d="M48 3l4 4 5-4-2 7h-6z" fill="#e27a18"/><circle cx="65" cy="30" r="6" fill="#f6a04c"/><circle cx="65" cy="30" r="2.500" fill="#b65c1b"/>`)}
      </label>
      <button class="app" aria-label="Task view">${icon(16, 16, svg`<path d="M.5 0v2.500h10V0M.5 16v-2.500h10V16M.5 5h10v6H.5zM14 0v16" stroke="#fff" stroke-width="1.200"/><path d="M12.500 5h3v3h-3z" fill="#fff"/>`)}</button>
      <button class="app run" aria-label="Edge">${icon(26, 26, svg`<defs><linearGradient id="e" x2="1"><stop stop-color="#239bd5"/><stop offset=".6" stop-color="#30bdb5"/><stop offset="1" stop-color="#5fd45b"/></linearGradient></defs><circle cx="13" cy="13" r="12" fill="#1468bb"/><path d="M1 12C2 5 7 1 13 1c7 0 12 5 12 11 0 4-3 6-7 6-3 0-5-1-3-3 2-5-6-8-14-3z" fill="url(#e)"/><path d="M9 10c-4 6 0 13 7 13 3 0 6-1 7-3-2 1-5 1-8 0-4-1-6-5-3-9z" fill="#0b3e86"/>`)}</button>
      <button class="app" aria-label="File Explorer">${icon(22, 20, svg`<path d="M0 2h8l2 2h11v14H0z" fill="#f2b632"/><path d="M0 6h22v12H0z" fill="#ffdc78"/><path d="M4 10h14v9h-4v-5H8v5H4z" fill="#369bdc"/>`)}</button>
      <button class="app" aria-label="Firefox">${icon(24, 24, svg`<defs><linearGradient id="f" x1="1" y1="0" x2="0" y2="1"><stop stop-color="#ffe14a"/><stop offset=".5" stop-color="#ff7a2a"/><stop offset="1" stop-color="#e9286a"/></linearGradient></defs><path d="M3 5l2 3 3-2q2-4 6-6-1 3 3 5l2-1q5 5 4 11-2 8-11 9Q2 23 1 14 1 9 3 5z" fill="url(#f)"/><circle cx="12" cy="13" r="5.500" fill="#7644c8"/><path d="M5 8q4-1 7 1l-3 2q0 3 4 3-4 4-8-1z" fill="#ff9130"/>`)}</button>
      <button class="app run avast" aria-label="Avast">${icon(24, 24, svg`<circle cx="12" cy="12" r="12" fill="#ff7800"/><path d="M9 4q2-1 3 1l4 11-3-2zM5 9q1-2 3 0l8 8-9-5zM4 15q0-2 3-1l10 4H7q-3 0-3-3z" fill="#fff"/>`)}</button>
      <button class="app run" aria-label="WinRAR">${booksIcon(24)}</button>
      <button class="app run active" aria-label="Paint">${paletteIcon(24)}</button>
      <div class="tray">
        <button aria-label="Hidden icons">${icon(12, 7, svg`<path d="M.5 6.500L6 1l5.500 5.500" stroke="#fff" stroke-width="1.200"/>`)}</button>
        <button aria-label="Meet now">${icon(12, 16, svg`<rect x=".6" y="4.600" width="7.500" height="7" rx="1.500" stroke="#fff" stroke-width="1.200"/><path d="M8 7l3-1.500v5L8 9M2 2q4-3 8 0M2 14q4 3 8 0" stroke="#fff"/>`)}</button>
        <button aria-label="Network">${icon(16, 14, svg`<path d="M5 2.500h10.500v7H4V6M9.500 10v3M6 13.500h7M.5 .5h4v4h-4zM2.500 5v6" stroke="#fff"/>`)}</button>
        <button aria-label="Volume">${icon(17, 14, svg`<path d="M.5 5h2.500l3.500-3.500v11L3 9H.5zM9 5q1.500 2 0 4M11.500 3q3 4 0 8M14 1q4.500 6 0 12" stroke="#fff"/>`)}</button>
        <div class="clock">10:50 AM<br />7/14/2025</div>
        <button class="note" aria-label="Notifications">${icon(16, 16, svg`<path d="M.5 .5h15v12h-5L8 15l-2.500-2.500h-5z" stroke="#fff" stroke-width="1.200"/>`)}</button>
      </div>`;
  }
}

@customElement("app-root")
class AppRoot extends LitElement {
  static styles = css`
    :host { display: flex; flex-direction: column; height: 100vh; overflow: hidden; }
    .desktop { flex: 1; position: relative; min-height: 0; overflow: hidden; }
    archive-window { position: absolute; left: 68px; top: 45px; width: 946px; height: 482px; }
    .flyout { position: absolute; left: 1014px; top: 69px; width: 134px; height: 289px; box-sizing: border-box; background: #fafafa; border-top: 1px solid #bbb; }
    paint-window { position: absolute; left: 134px; top: 71px; width: 1010px; height: 569px; }
    .mark { position: absolute; right: 46px; bottom: 5px; display: flex; align-items: center; gap: 3px; color: #fff; opacity: 0.6; font: 400 34px/66px Roboto, sans-serif; text-shadow: 0 0 3px #888; pointer-events: none; }
    .mark svg { display: block; filter: drop-shadow(0 0 1px #888); }
  `;
  render() {
    return html`
      <div class="desktop">
        <browser-window></browser-window>
        <archive-window></archive-window>
        <div class="flyout"></div>
        <paint-window></paint-window>
        <div class="mark"><span>ANY</span>${icon(54, 66, svg`<path d="M3 14v42M12 22V4L51 33 12 62V46l20-13-20-11v14" stroke="#fff" stroke-width="4" stroke-linejoin="round"/>`)}<span>RUN</span></div>
      </div>
      <task-bar></task-bar>`;
  }
}
